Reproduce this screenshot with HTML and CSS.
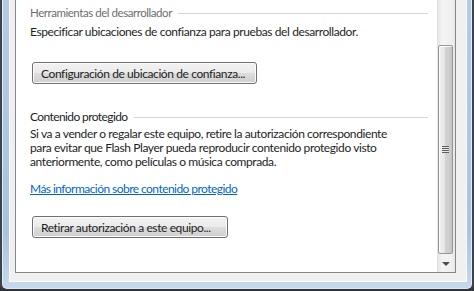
FILE: index.html
```html
<!DOCTYPE html>
<html lang="es">
<head>
  <meta charset="UTF-8" />
  <title>Configuración de Flash Player</title>
  <link rel="stylesheet" href="styles.css">
</head>
<body>

  <div class="window">
    <div class="panel">
      <div class="content">
        <div class="pane">
          <section class="group">
            <h2 class="group-title muted">Herramientas del desarrollador</h2>
            <p class="text">Especificar ubicaciones de confianza para pruebas del desarrollador.</p>
            <button class="btn btn-trust">Configuración de ubicación de confianza...</button>
          </section>

          <section class="group">
            <h2 class="group-title">Contenido protegido</h2>
            <p class="text text-block">Si va a vender o regalar este equipo, retire la autorización correspondiente<br>para evitar que Flash Player pueda reproducir contenido protegido visto<br>anteriormente, como películas o música comprada.</p>
            <a class="link" href="#">Más información sobre contenido protegido</a>
            <button class="btn btn-revoke">Retirar autorización a este equipo...</button>
          </section>
        </div>

        <div class="scrollbar">
          <div class="track">
            <div class="thumb"><span class="grip"></span></div>
          </div>
          <div class="arrow-down"></div>
        </div>
      </div>
    </div>
  </div>

</body>
</html>
```

FILE: styles.css
```css
body {
  margin: 0;
  background: #2f343a;
  font-family: Lato, 'Noto Sans', sans-serif;
  font-size: 12px;
  letter-spacing: -0.4px;
  color: #1e1e1e;
  overflow: hidden;
}

.window {
  width: 474px;
  height: 291px;
  box-sizing: border-box;
  padding: 0 5px 7px 7px;
  display: flex;
  background: linear-gradient(to bottom, #b4cbe4, #a9c3df 80%, #c7d9ec);
  border-left: 2px solid #3d434b;
  border-right: 2px solid #3d434b;
  border-bottom: 2px solid #30353b;
  border-radius: 0 0 7px 7px;
  box-shadow: inset 1px 0 #e4edf6, inset -1px 0 #e4edf6, inset 0 -1px #dfe9f4;
}

.panel {
  flex: 1;
  display: flex;
  padding: 0 11px 9px 6px;
  background: #f0f0f0;
  box-shadow: inset 1px 0 #fbfbfb, inset -1px 0 #fbfbfb, inset 0 -1px #fbfbfb;
}

.content {
  flex: 1;
  display: flex;
  background: #fff;
  border: 1px solid #828790;
  border-top: none;
}

.pane {
  flex: 1;
  padding: 6px 9px 0 14px;
  white-space: nowrap;
}

/* group heading with the rule running to the right */
.group-title {
  display: flex;
  align-items: center;
  gap: 6px;
  margin: 0;
  font-size: 12px;
  font-weight: normal;
  letter-spacing: -0.6px;
  line-height: 14px;
}

.group-title::after {
  content: "";
  flex: 1;
  height: 1px;
  background: #d5d5d5;
}

.muted {
  color: #6e6e6e;
  font-size: 11.5px;
  letter-spacing: -0.45px;
}

.text {
  margin: 5px 0 0;
  line-height: 14px;
}

.text-block {
  margin-top: 3px;
}

.group + .group {
  margin-top: 26px;
}

.link {
  display: block;
  margin-top: 13px;
  line-height: 14px;
  color: #0066cc;
  letter-spacing: -0.55px;
  width: max-content;
}

.btn {
  display: block;
  height: 22px;
  padding: 0 8px;
  font-family: inherit;
  font-size: 12px;
  letter-spacing: inherit;
  color: #1e1e1e;
  text-align: left;
  white-space: nowrap;
  border: 1px solid #707070;
  border-radius: 3px;
  background: linear-gradient(to bottom, #f2f2f2 0%, #ebebeb 50%, #dddddd 51%, #cfcfcf 100%);
  box-shadow: inset 0 0 0 1px #fcfcfc;
  margin-left: 2px;
}

.btn-trust {
  margin-top: 23px;
  width: 225px;
}

.btn-revoke {
  margin-top: 20px;
  width: 196px;
}

.scrollbar {
  width: 18px;
  display: flex;
  flex-direction: column;
  background: linear-gradient(to right, #e3e3e3, #f4f4f4 30%, #f0f0f0 80%, #e6e6e6);
}

.track {
  flex: 1;
  display: flex;
  padding: 45px 2px 1px 1px;
}

.thumb {
  flex: 1;
  display: flex;
  align-items: center;
  justify-content: center;
  border: 1px solid #979797;
  border-radius: 2px;
  background: linear-gradient(to right, #f2f2f2, #e4e4e4 45%, #d2d2d2 50%, #cbcbcb 90%, #bdbdbd);
  box-shadow: inset 1px 1px #fafafa;
}

.grip {
  width: 7px;
  height: 7px;
  background: repeating-linear-gradient(to bottom, #5f5f5f 0 1px, #e8e8e8 1px 2px);
}

.arrow-down {
  height: 17px;
  display: flex;
  align-items: center;
  justify-content: center;
}

.arrow-down::before {
  content: "";
  border-left: 4px solid transparent;
  border-right: 4px solid transparent;
  border-top: 4px solid #4d4d4d;
}
```
